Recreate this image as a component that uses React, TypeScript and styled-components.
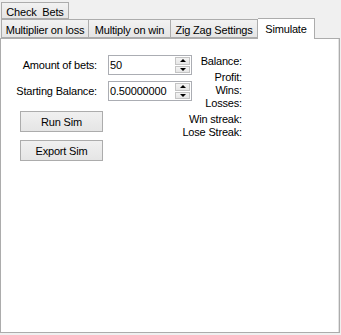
import styled, { createGlobalStyle } from 'styled-components';

const GlobalStyle = createGlobalStyle`
  html, body {
    margin: 0;
    padding: 0;
    background: #f0f0f0;
  }
  body {
    font-family: 'Liberation Sans', Arial, sans-serif;
    font-size: 11px;
    letter-spacing: -0.18px;
    color: #000;
  }
`;

export default function App() {
  return (
    <>
      <GlobalStyle />
      <TabControl>
        <TabRow>
          <Tab $width={68} $height={17}>Check&nbsp; Bets</Tab>
        </TabRow>
        <TabRow $bottom>
          <Tab $width={88}>Multiplier on loss</Tab>
          <Tab $width={82}>Multiply on win</Tab>
          <Tab $width={87}>Zig Zag Settings</Tab>
          <Tab $width={56} $selected>Simulate</Tab>
        </TabRow>
        <TabPage>
          <LeftPane>
            <FieldGrid>
              <FieldLabel>Amount of bets:</FieldLabel>
              <NumberBox>
                <NumberValue>50</NumberValue>
                <Spinner>
                  <SpinButton><Arrow $up /></SpinButton>
                  <SpinButton><Arrow /></SpinButton>
                </Spinner>
              </NumberBox>
              <FieldLabel>Starting Balance:</FieldLabel>
              <NumberBox>
                <NumberValue>0.50000000</NumberValue>
                <Spinner>
                  <SpinButton><Arrow $up /></SpinButton>
                  <SpinButton><Arrow /></SpinButton>
                </Spinner>
              </NumberBox>
            </FieldGrid>
            <ButtonStack>
              <Button>Run Sim</Button>
              <Button>Export Sim</Button>
            </ButtonStack>
          </LeftPane>
          <Stats>
            <StatLabel>Balance:</StatLabel>
            <StatLabel $gap={3}>Profit:</StatLabel>
            <StatLabel>Wins:</StatLabel>
            <StatLabel>Losses:</StatLabel>
            <StatLabel $gap={3}>Win streak:</StatLabel>
            <StatLabel>Lose Streak:</StatLabel>
          </Stats>
        </TabPage>
      </TabControl>
    </>
  );
}

const TabControl = styled.div`
  width: 340px;
  display: flex;
  flex-direction: column;
  padding-top: 2px;
`;

const TabRow = styled.div<{ $bottom?: boolean }>`
  display: flex;
  align-items: flex-end;
  padding-left: 1px;
  height: ${(p) => (p.$bottom ? '19px' : '17px')};
  position: relative;
  z-index: ${(p) => (p.$bottom ? 2 : 1)};
`;

const Tab = styled.div<{ $width: number; $height?: number; $selected?: boolean }>`
  box-sizing: border-box;
  width: ${(p) => p.$width + (p.$selected ? 1 : 0)}px;
  height: ${(p) => (p.$selected ? 21 : p.$height ?? 19)}px;
  margin-bottom: ${(p) => (p.$selected ? '-1px' : '0')};
  display: flex;
  align-items: center;
  justify-content: center;
  padding-top: ${(p) => (p.$selected ? '0' : '2px')};
  border: 1px solid #acacac;
  border-bottom: ${(p) => (p.$selected ? 'none' : '1px solid #acacac')};
  background: ${(p) => (p.$selected ? '#ffffff' : 'linear-gradient(#f2f2f2, #e5e5e5)')};
  white-space: nowrap;
  & + & {
    border-left: none;
  }
`;

const TabPage = styled.div`
  box-sizing: border-box;
  height: 295px;
  background: #fff;
  border: 1px solid #acacac;
  box-shadow: inset -1px 0 0 #e3e3e3;
  display: flex;
  align-items: flex-start;
  padding-top: 16px;
`;

const LeftPane = styled.div`
  width: 191px;
  display: flex;
  flex-direction: column;
`;

const FieldGrid = styled.div`
  display: grid;
  grid-template-columns: 96px 84px;
  column-gap: 11px;
  row-gap: 6px;
  align-items: center;
`;

const FieldLabel = styled.div`
  text-align: right;
  white-space: nowrap;
`;

const NumberBox = styled.div`
  box-sizing: border-box;
  height: 20px;
  border: 1px solid #abadb3;
  display: flex;
  align-items: stretch;
  background: #fff;
`;

const NumberValue = styled.span`
  flex: 1;
  padding-left: 1px;
  line-height: 18px;
`;

const Spinner = styled.div`
  width: 15px;
  display: flex;
  flex-direction: column;
  gap: 1px;
  padding: 1px 1px 1px 0;
`;

const SpinButton = styled.div`
  flex: 1;
  box-sizing: border-box;
  border: 1px solid #c4c4c4;
  background: linear-gradient(#f3f3f3, #e6e6e6);
  display: flex;
  align-items: center;
  justify-content: center;
`;

const Arrow = styled.span<{ $up?: boolean }>`
  width: 0;
  height: 0;
  border-left: 3px solid transparent;
  border-right: 3px solid transparent;
  ${(p) => (p.$up ? 'border-bottom: 3px solid #000;' : 'border-top: 3px solid #000;')}
`;

const ButtonStack = styled.div`
  display: flex;
  flex-direction: column;
  gap: 8px;
  margin: 10px 0 0 19px;
`;

const Button = styled.div`
  box-sizing: border-box;
  width: 83px;
  height: 21px;
  border: 1px solid #acacac;
  background: linear-gradient(#f0f0f0, #e5e5e5);
  display: flex;
  align-items: center;
  justify-content: center;
`;

const Stats = styled.div`
  width: 50px;
  display: flex;
  flex-direction: column;
  align-items: flex-end;
`;

const StatLabel = styled.div<{ $gap?: number }>`
  line-height: 13px;
  margin-top: ${(p) => p.$gap ?? 0}px;
  white-space: nowrap;
`;
